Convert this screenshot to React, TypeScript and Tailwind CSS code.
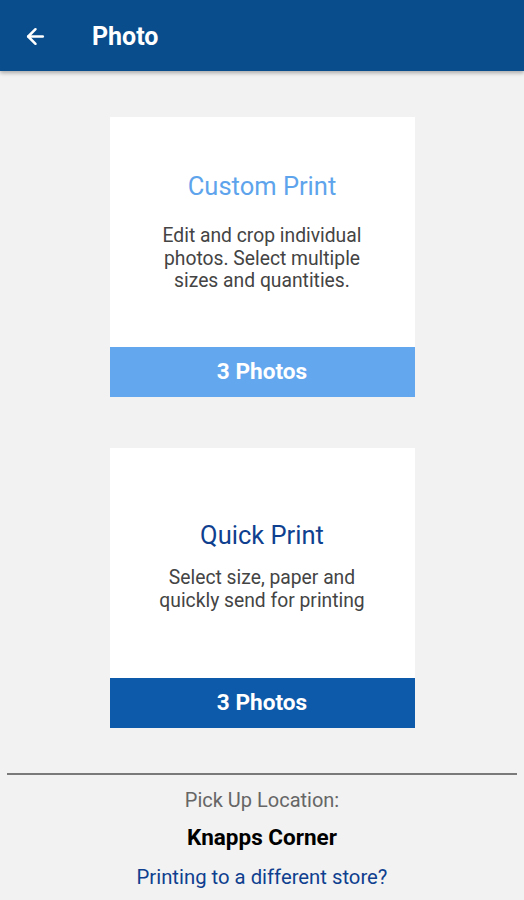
import { ArrowLeft } from "lucide-react";

type PrintOption = {
  title: string;
  description: string[];
  titleClass: string;
  buttonClass: string;
  bodyClass: string;
};

const options: PrintOption[] = [
  {
    title: "Custom Print",
    description: ["Edit and crop individual", "photos. Select multiple", "sizes and quantities."],
    titleClass: "text-[#5ea4ec]",
    buttonClass: "bg-[#63a8ef]",
    bodyClass: "mt-[24px]",
  },
  {
    title: "Quick Print",
    description: ["Select size, paper and", "quickly send for printing"],
    titleClass: "text-[#0f3f8f]",
    buttonClass: "bg-[#0e5aaa]",
    bodyClass: "mt-[17px]",
  },
];

function OptionCard({ option, offset }: { option: PrintOption; offset: string }) {
  return (
    <div className="flex h-[280px] w-[305px] flex-col bg-white">
      <div className={`flex flex-1 flex-col items-center justify-center px-2 text-center ${offset}`}>
        <h2 className={`text-[25.5px] leading-[30px] ${option.titleClass}`}>{option.title}</h2>
        <p className={`${option.bodyClass} text-[19.3px] leading-[22.5px] text-[#444]`}>
          {option.description.map((line) => (
            <span key={line} className="block whitespace-nowrap">
              {line}
            </span>
          ))}
        </p>
      </div>
      <button
        className={`h-[50px] w-full text-[22.6px] font-bold text-white ${option.buttonClass}`}
      >
        3 Photos
      </button>
    </div>
  );
}

export default function App() {
  return (
    <div className="flex h-[900px] w-full flex-col bg-[#f2f2f2] font-['Roboto',sans-serif]">
      <header className="relative z-10 flex h-[71px] shrink-0 items-center bg-[#0a4d8c] pt-[2px] shadow-[0_2px_4px_rgba(0,0,0,0.3)]">
        <ArrowLeft className="ml-[23px] h-[25px] w-[25px] text-white" strokeWidth={2.4} />
        <h1 className="ml-[44px] text-[25px] font-bold text-white">Photo</h1>
      </header>

      <main className="flex flex-col items-center gap-[51px] pt-[46px]">
        <OptionCard option={options[0]} offset="pt-0" />
        <OptionCard option={options[1]} offset="pt-[6px]" />
      </main>

      <div className="mx-[7px] mt-[45px] border-t-2 border-[#7a7a7a]" />

      <footer className="flex flex-col items-center text-center">
        <p className="mt-[13px] text-[20px] leading-[24px] text-[#666]">Pick Up Location:</p>
        <p className="mt-[12px] text-[22.5px] font-bold leading-[26px] text-black">Knapps Corner</p>
        <p className="mt-[14px] text-[20.3px] leading-[26px] text-[#0f3f8f]">
          Printing to a different store?
        </p>
      </footer>
    </div>
  );
}
